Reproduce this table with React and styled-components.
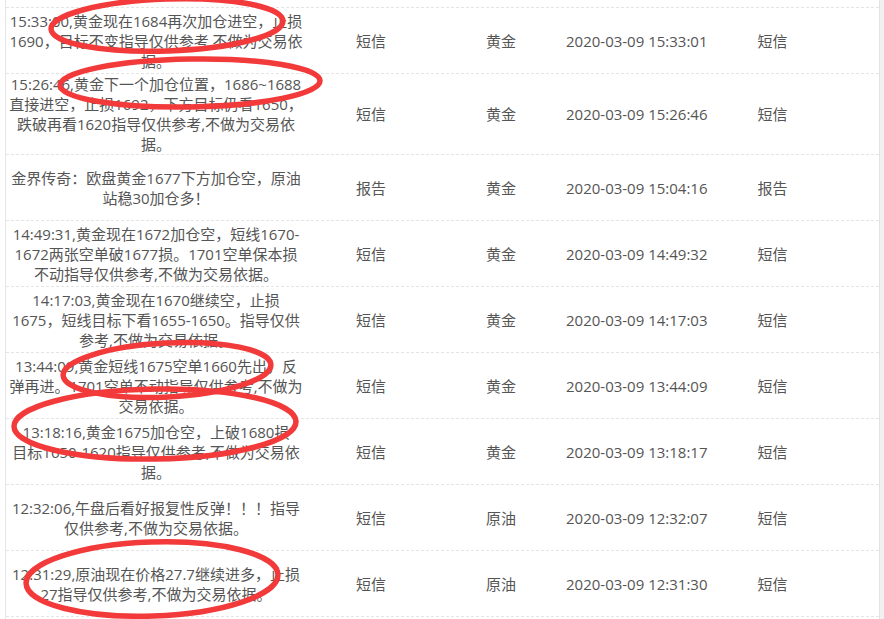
import React from 'react';
import styled, { createGlobalStyle } from 'styled-components';

const rows = [
  {
    text: ['15:33:00,黄金现在1684再次加仓进空，止损', '1690，目标不变指导仅供参考,不做为交易依', '据。'],
    type: '短信',
    product: '黄金',
    time: '2020-03-09 15:33:01',
    source: '短信',
  },
  {
    text: [
      '15:26:46,黄金下一个加仓位置，1686~1688',
      '直接进空，止损1692，下方目标仍看1650，',
      '跌破再看1620指导仅供参考,不做为交易依',
      '据。',
    ],
    type: '短信',
    product: '黄金',
    time: '2020-03-09 15:26:46',
    source: '短信',
  },
  {
    text: ['金界传奇：欧盘黄金1677下方加仓空，原油', '站稳30加仓多！'],
    type: '报告',
    product: '黄金',
    time: '2020-03-09 15:04:16',
    source: '报告',
  },
  {
    text: ['14:49:31,黄金现在1672加仓空，短线1670-', '1672两张空单破1677损。1701空单保本损', '不动指导仅供参考,不做为交易依据。'],
    type: '短信',
    product: '黄金',
    time: '2020-03-09 14:49:32',
    source: '短信',
  },
  {
    text: ['14:17:03,黄金现在1670继续空，止损', '1675，短线目标下看1655-1650。指导仅供', '参考,不做为交易依据。'],
    type: '短信',
    product: '黄金',
    time: '2020-03-09 14:17:03',
    source: '短信',
  },
  {
    text: ['13:44:09,黄金短线1675空单1660先出，反', '弹再进。1701空单不动指导仅供参考,不做为', '交易依据。'],
    type: '短信',
    product: '黄金',
    time: '2020-03-09 13:44:09',
    source: '短信',
  },
  {
    text: ['13:18:16,黄金1675加仓空，上破1680损', '目标1650-1620指导仅供参考,不做为交易依', '据。'],
    type: '短信',
    product: '黄金',
    time: '2020-03-09 13:18:17',
    source: '短信',
  },
  {
    text: ['12:32:06,午盘后看好报复性反弹！！！指导', '仅供参考,不做为交易依据。'],
    type: '短信',
    product: '原油',
    time: '2020-03-09 12:32:07',
    source: '短信',
  },
  {
    text: ['12:31:29,原油现在价格27.7继续进多，止损', '27指导仅供参考,不做为交易依据。'],
    type: '短信',
    product: '原油',
    time: '2020-03-09 12:31:30',
    source: '短信',
  },
];

// hand drawn red marks over the list
const marks = [
  { cx: 167, cy: 25, rx: 116, ry: 26, rot: -2 },
  { cx: 190, cy: 83, rx: 130, ry: 24, rot: -1 },
  { cx: 167, cy: 370, rx: 104, ry: 27, rot: -3 },
  { cx: 155, cy: 424, rx: 141, ry: 35, rot: -1 },
  { cx: 152, cy: 579, rx: 126, ry: 37, rot: -2 },
];

export default function App() {
  return (
    <Page>
      <GlobalStyle />
      <Table>
        {rows.map((row, i) => (
          <Row key={i}>
            <ContentCell>
              {row.text.map((line, j) => (
                <Line key={j}>{line}</Line>
              ))}
            </ContentCell>
            <Cell>{row.type}</Cell>
            <Cell>{row.product}</Cell>
            <Cell>{row.time}</Cell>
            <Cell $last>{row.source}</Cell>
          </Row>
        ))}
      </Table>
      <SideStrip />
      <Marks width="884" height="619" viewBox="0 0 884 619">
        {marks.map((m, i) => (
          <ellipse
            key={i}
            cx={m.cx}
            cy={m.cy}
            rx={m.rx}
            ry={m.ry}
            transform={`rotate(${m.rot} ${m.cx} ${m.cy})`}
            fill="none"
            stroke="#f23a3a"
            strokeWidth="5.5"
          />
        ))}
      </Marks>
    </Page>
  );
}

const GlobalStyle = createGlobalStyle`
  html, body {
    margin: 0;
    padding: 0;
    background: #fff;
  }
  body {
    font-family: "Open Sans", "Noto Sans CJK SC", sans-serif;
  }
`;

const Page = styled.div`
  position: relative;
  width: 884px;
  height: 619px;
  overflow: hidden;
  display: flex;
  padding-left: 5px;
  box-sizing: border-box;
`;

const Table = styled.div`
  flex: 1;
  border-left: 1px solid #e6e6e6;
  border-right: 1px solid #e3e3e3;
  padding-top: 7px;
  color: #555;
  font-size: 15px;
  line-height: 20px;
`;

const Row = styled.div`
  display: grid;
  grid-template-columns: 300px 130px 130px 140px 1fr;
  align-items: center;
  min-height: 65px;
  border-top: 1px dashed #e4e4e4;
  &:last-child {
    border-bottom: 1px dashed #e4e4e4;
  }
`;

const ContentCell = styled.div`
  display: flex;
  flex-direction: column;
  align-items: center;
  text-align: center;
  white-space: nowrap;
`;

const Line = styled.span`
  display: block;
`;

const Cell = styled.div`
  text-align: center;
  white-space: nowrap;
  padding-right: ${(p) => (p.$last ? '40px' : '0')};
`;

const SideStrip = styled.div`
  width: 4px;
  background: #f1f1f1;
`;

const Marks = styled.svg`
  position: absolute;
  top: 0;
  left: 0;
  pointer-events: none;
`;
